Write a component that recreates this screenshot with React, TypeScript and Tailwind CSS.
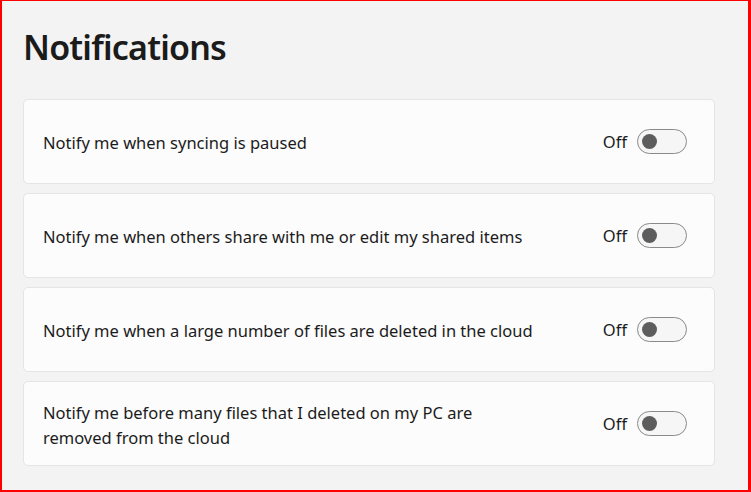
import React from "react";

const items: string[][] = [
  ["Notify me when syncing is paused"],
  ["Notify me when others share with me or edit my shared items"],
  ["Notify me when a large number of files are deleted in the cloud"],
  ["Notify me before many files that I deleted on my PC are", "removed from the cloud"],
];

function Toggle() {
  return (
    <div className="flex h-[25px] w-[50px] items-center rounded-full border border-[#8a8a8a] bg-[#f6f6f6] pl-[4px]">
      <div className="h-[15px] w-[15px] rounded-full bg-[#5d5d5d]" />
    </div>
  );
}

export default function App() {
  return (
    <div
      className="box-border h-[492px] w-[751px] border-b-2 border-l-2 border-r-[3px] border-t border-[#ff0000] bg-[#f3f3f3] pl-[21px] pr-[33px]"
      style={{ fontFamily: '"Noto Sans", sans-serif' }}
    >
      <h1 className="pt-[24px] text-[34px] font-semibold leading-[44px] tracking-[-0.8px] text-[#1b1b1b]">
        Notifications
      </h1>
      <div className="mt-[30px] flex flex-col gap-[9px]">
        {items.map((lines, i) => (
          <div
            key={i}
            className="flex h-[85px] items-center justify-between rounded-[5px] border border-[#e5e5e5] bg-[#fcfcfc] pl-[19px] pr-[27px]"
          >
            <div className="pt-[2px] text-[16.5px] leading-[25px] text-[#1b1b1b]">
              {lines.map((l, j) => (
                <div key={j}>{l}</div>
              ))}
            </div>
            <div className="flex items-center gap-[10px]">
              <span className="pt-[2px] text-[16.5px] text-[#1b1b1b]">Off</span>
              <Toggle />
            </div>
          </div>
        ))}
      </div>
    </div>
  );
}
